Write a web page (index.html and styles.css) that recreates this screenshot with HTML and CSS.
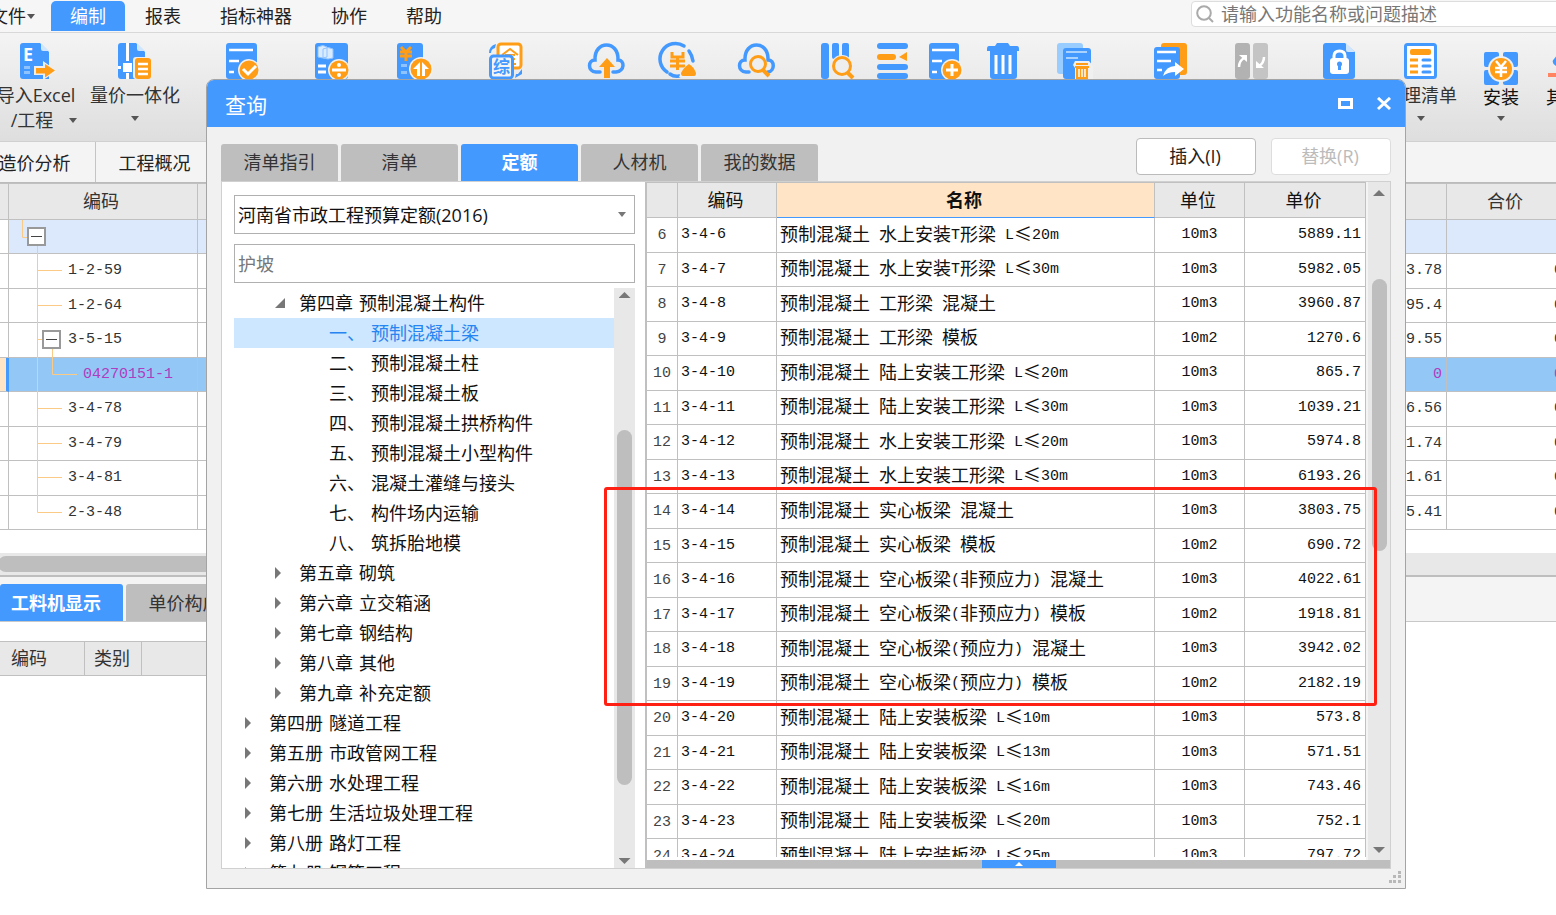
FILE: index.html
```html
<!DOCTYPE html>
<html lang="zh-CN">
<head>
<meta charset="utf-8">
<title>查询</title>
<link rel="stylesheet" href="styles.css">
</head>
<body>
<div class="app">
  <nav class="menubar">
    <button class="menu-item menu-file">文件<svg class="caret" viewBox="0 0 8 5"><path d="M0 0h8L4 5z"/></svg></button>
    <button class="menu-item active">编制</button>
    <button class="menu-item">报表</button>
    <button class="menu-item">指标神器</button>
    <button class="menu-item">协作</button>
    <button class="menu-item">帮助</button>
    <label class="search">
      <svg viewBox="0 0 18 18" aria-hidden="true"><circle cx="8" cy="8" r="6.8"/><path d="M13 13l4 4"/></svg>
      <input type="text" aria-label="搜索" placeholder="请输入功能名称或问题描述">
    </label>
  </nav>

  <div class="ribbon">
    <button class="tool tool-import">
      <svg class="icon" viewBox="0 0 36 36"><path class="b" d="M5 0h17l9 9v27H5q-3 0-3-3V3q0-3 3-3z"/><path class="lb" d="M23 0l8 8h-6q-2 0-2-2z"/><text class="w-text" x="5" y="18" font-size="18">E</text><path d="M6 23h6v3H6zM6 28h6v3H6z" fill="#8fc3ff"/><path d="M16 23h9v-5l14 10-14 9v-5h-9z" fill="#eee"/><path class="o" d="M18 25h9v-4l10 6.500-10 7v-4h-9z"/></svg>
      <span class="tool-label">导入Excel</span>
      <span class="tool-label tool-second">/工程<svg class="caret" viewBox="0 0 8 5"><path d="M0 0h8L4 5z"/></svg></span>
    </button>
    <button class="tool tool-unify">
      <svg class="icon" viewBox="0 0 36 36"><path class="b" d="M4 0h15l9 9v27H4q-3 0-3-3V3q0-3 3-3z"/><path class="lb" d="M20 0l8 8h-6q-2 0-2-2z"/><path d="M9 0h3v18H9zM9 30h3v6H9zM1 23h3v3H1zM6 20h9v9H6z" fill="#fff"/><rect x="16" y="14" width="18" height="22" rx="3" fill="#eee"/><rect class="o" x="18" y="15" width="16" height="21" rx="3"/><path class="ws" stroke-width="2.500" d="M21 21h10M21 26h10M21 31h10"/></svg>
      <span class="tool-label">量价一体化</span>
      <svg class="caret tool-caret" viewBox="0 0 8 5"><path d="M0 0h8L4 5z"/></svg>
    </button>
    <div class="icon-strip">
      <button aria-label="清单检查"><svg class="icon" viewBox="0 0 36 36"><rect class="b" x="1" width="31" height="36" rx="3"/><path class="ws" stroke-width="2.500" d="M4 7h24M4 18h10M4 29h5"/><circle cx="24" cy="27" r="11" fill="#f0f0f0"/><circle class="o" cx="24" cy="27" r="9.500"/><path class="ws" stroke-width="3" d="M18 26l5 5 8-8"/></svg></button>
      <button aria-label="费用分摊"><svg class="icon" viewBox="0 0 36 36"><rect class="b" x="1" width="33" height="36" rx="3"/><path d="M4 4q5-3 9 0v10q-4 2-9 0zM9 6q5-3 10 0v9q-5 2-10 0z" fill="#d9ebff" stroke="#8fc3ff"/><path class="ws" stroke-width="3" d="M4 23h8M4 29h8"/><circle cx="25" cy="27" r="11" fill="#f0f0f0"/><circle class="o" cx="25" cy="27" r="9.500"/><path class="ws" stroke-width="3" d="M18 27h14"/><circle cx="25" cy="22" r="2" fill="#fff"/><circle cx="25" cy="32" r="2" fill="#fff"/></svg></button>
      <button aria-label="调整造价"><svg class="icon" viewBox="0 0 36 36"><rect class="b" x="1" width="26" height="36" rx="3"/><path class="os" stroke-width="3" d="M5 4l5 5 5-5M10 9v9M4 9h12M4 13h12"/><path d="M5 21h6v3H5zM5 28h6v3H5z" fill="#8fc3ff"/><circle cx="25" cy="26" r="12" fill="#f0f0f0"/><circle class="o" cx="25" cy="26" r="10.500"/><path fill="#fff" d="M24 19v14h-3v-7h-4zM26 33V19l7 7h-4v7z"/></svg></button>
      <button aria-label="综合换算"><svg class="icon" viewBox="0 0 36 36"><rect x="10" y="1" width="23" height="24" rx="3" fill="#fff" stroke="#ff9d17" stroke-width="3"/><path class="os" stroke-width="2" d="M14 12l8-6 8 6M17 12h10M27 16h-3v5h4"/><rect x="1" y="12" width="25" height="24" rx="3" fill="#f4f4f4"/><rect x="2.500" y="13" width="22" height="22" rx="3" fill="#f4f4f4" stroke="#49f" stroke-width="3"/><text class="b" x="5" y="30" font-size="17" font-weight="700">综</text><path class="b" d="M1 10q0-7 7-9L7 5Q3 6 3 10zM34 26v5l-7 4 1-4h2z"/></svg></button>
      <button aria-label="云上传"><svg class="icon" viewBox="0 0 36 36"><path class="bs" stroke-width="3.500" d="M12 29H8C-1 28 0 17 7 17 6-3 31-3 30 17c7 0 7 11-2 12h-3"/><path class="o" d="M19 15l8 9h-5v11h-6V24h-5z"/></svg></button>
      <button aria-label="云计价"><svg class="icon" viewBox="0 0 36 36"><path class="bs" stroke-width="3.500" d="M7 29A15.500 15.500 0 0 1 24 3M29 8q3 4 4 10M10 31q4 3 9 2"/><path class="os" stroke-width="3" d="M12 9v5h11V9M17.500 14v13M10 18h15M10 23h15"/><path d="M29 18q-5 6-10 16h20z" fill="#eee"/><path class="o" d="M29 21q5 3 7 9 0 3-2 3H23q-2 0-2-3 3-6 8-9z"/></svg></button>
      <button aria-label="云查询"><svg class="icon" viewBox="0 0 36 36"><path class="bs" stroke-width="3.500" d="M11 29H8C-1 28 0 17 7 17 6-3 31-3 30 17c7 0 7 11 0 12"/><circle cx="20" cy="21" r="9" fill="#eee"/><circle class="os" cx="20" cy="21" r="7.500" stroke-width="3"/><path class="os" stroke-width="4" d="M25 27l6 6"/></svg></button>
      <button aria-label="查询"><svg class="icon" viewBox="0 0 36 36"><rect class="b" x="1" width="8" height="36" rx="3"/><rect class="b" x="12" width="7" height="16" rx="2"/><rect class="b" x="22" width="7" height="16" rx="2"/><circle cx="22" cy="23" r="11" fill="#eee"/><circle class="os" cx="22" cy="23" r="8.500" stroke-width="3"/><path class="os" stroke-width="4" d="M28 30l5 5"/></svg></button>
      <button aria-label="插入行"><svg class="icon" viewBox="0 0 36 36"><g class="b"><rect x="2" width="31" height="6" rx="3"/><rect x="2" y="21" width="31" height="6" rx="3"/><rect x="2" y="30" width="31" height="6" rx="3"/></g><rect class="o" x="2" y="11" width="19" height="6" rx="3"/><path class="o" d="M32 9v9l-8-4z"/></svg></button>
      <button aria-label="补充"><svg class="icon" viewBox="0 0 36 36"><rect class="b" x="1" width="30" height="36" rx="3"/><path class="ws" stroke-width="2.500" d="M4 7h23M4 18h10M4 29h5"/><circle cx="24" cy="27" r="11" fill="#f0f0f0"/><circle class="o" cx="24" cy="27" r="9.500"/><path class="ws" stroke-width="3" d="M18 27h12M24 21v12"/></svg></button>
      <button aria-label="删除"><svg class="icon" viewBox="0 0 36 36"><path class="b" d="M12 0h11l2 3h7q2 0 2 3v2H2V6q0-3 2-3h6zM5 8h27v25q0 3-3 3H8q-3 0-3-3z"/><path class="ws" stroke-width="3" d="M11 12v19M18 12v19M25 12v19"/></svg></button>
      <button aria-label="批量删除"><svg class="icon" viewBox="0 0 36 36"><rect x="0" width="26" height="31" rx="3" fill="#9cf"/><rect class="b" x="6" y="5" width="28" height="31" rx="3"/><path d="M9 9h21M9 15h12" stroke="#a9d2ff" stroke-width="2"/><path d="M18 18h14l4 5v13H18v-11l-2-3z" fill="#f0f0f0"/><path class="o" d="M19 20h12v2H19zM18 23h14v2H18zM19 25h12v11H19z"/><path class="ws" stroke-width="1.500" d="M22 26v8M25 26v8M28 26v8"/></svg></button>
      <button aria-label="复用组价"><svg class="icon" viewBox="0 0 36 36"><rect class="o" x="8" width="26" height="32" rx="3"/><rect class="b" x="1" y="4" width="26" height="32" rx="3"/><path class="ws" stroke-width="2.500" d="M4 9h19M4 18h14M4 27h5"/><path d="M10 33q3-10 12-10v-4l9 7-9 7v-4q-7 0-12 4z" fill="#fff"/></svg></button>
      <button aria-label="替换数据"><svg class="icon" viewBox="0 0 36 36"><rect x="1" width="15" height="36" rx="3" fill="#b2b2b2"/><rect x="19" width="15" height="36" rx="3" fill="#c4c4c4"/><path class="ws" stroke-width="2.500" d="M5 24q0-6 5-9M30 14q0 6-5 9"/><path d="M5 12h8v7zM22 18v7h8z" fill="#fff"/></svg></button>
      <button aria-label="锁定清单"><svg class="icon" viewBox="0 0 36 36"><path class="b" d="M5 0h19l10 9v24q0 3-3 3H5q-3 0-3-3V3q0-3 3-3z"/><path class="lb" d="M25 0l9 9h-7q-2 0-2-2z"/><rect x="9" y="15" width="19" height="16" rx="3" fill="#fff"/><path class="ws" stroke-width="3" d="M13 17v-4q0-5 5.500-5t5.500 5v4"/><circle class="b" cx="18.500" cy="21" r="2.500"/><path class="b" d="M17 21h3v6h-3z"/></svg></button>
    </div>
    <button class="tool tool-sort">
      <svg class="icon" viewBox="0 0 36 36"><rect x="2.500" y="1.500" width="30" height="33" rx="2" fill="#fff" stroke="#49f" stroke-width="3"/><rect class="o" x="7" y="6" width="21" height="6" rx="2"/><path class="os" stroke-width="3" d="M7 17h8M7 23h8M7 29h8"/><path class="bs" stroke-width="3" d="M20 17h7M20 23h7M20 29h7"/></svg>
      <span class="tool-label">整理清单</span>
      <svg class="caret tool-caret" viewBox="0 0 8 5"><path d="M0 0h8L4 5z"/></svg>
    </button>
    <button class="tool tool-install">
      <svg class="icon" viewBox="0 0 36 36"><g class="b"><rect x="1" y="1" width="15" height="15" rx="2"/><rect x="20" y="1" width="15" height="15" rx="2"/><rect x="1" y="19" width="15" height="15" rx="2"/><rect x="20" y="19" width="15" height="15" rx="2"/></g><circle cx="18" cy="18" r="13" fill="#f0f0f0"/><circle class="o" cx="18" cy="18" r="11"/><path class="ws" stroke-width="2.500" d="M13 10l5 6 5-6M18 16v10M12 17h12M12 21h12"/></svg>
      <span class="tool-label">安装</span>
      <svg class="caret tool-caret" viewBox="0 0 8 5"><path d="M0 0h8L4 5z"/></svg>
    </button>
    <button class="tool tool-other">
      <svg class="icon" viewBox="0 0 36 36"><path class="b" d="M12 11h8v13h-8q-8-4-4-8z"/><path d="M2 30h28v4H2z" fill="#ff8562"/></svg>
      <span class="tool-label">其他</span>
    </button>
  </div>

  <nav class="doc-tabs">
    <button>造价分析</button>
    <button>工程概况</button>
  </nav>

  <div class="bill-wrap">
    <table class="bill">
      <colgroup><col class="c-mark"><col class="c-code"><col><col class="c-price"><col class="c-total"></colgroup>
      <thead><tr><th></th><th>编码</th><th></th><th></th><th>合价</th></tr></thead>
      <tbody>
        <tr class="group"><td></td><td><div class="node"><svg class="guide g1" viewBox="0 0 18 34"><path d="M13.500 0v17.500H18M28.500 17v18"/></svg><button class="fold" aria-label="折叠"></button></div></td><td></td><td></td><td></td></tr>
        <tr><td></td><td><div class="node"><svg class="guide" viewBox="0 0 59 34"><path d="M28.500-1v36M28 16.500h25"/></svg>1-2-59</div></td><td></td><td>3.78</td><td>0</td></tr>
        <tr><td></td><td><div class="node"><svg class="guide" viewBox="0 0 59 34"><path d="M28.500-1v36M28 16.500h25"/></svg>1-2-64</div></td><td></td><td>95.4</td><td>0</td></tr>
        <tr><td></td><td><div class="node"><svg class="guide g2" viewBox="0 0 33 34"><path d="M28.500-1v36M28 16.500h5M43.500 17v18"/></svg><button class="fold" aria-label="折叠"></button><span class="after-fold">3-5-15</span></div></td><td></td><td>9.55</td><td>0</td></tr>
        <tr class="selected"><td></td><td><div class="node"><svg class="guide g3" viewBox="0 0 74 34"><path d="M28.500-1v36M43.500-1v17.500H68"/></svg>04270151-1</div></td><td></td><td>0</td><td>0</td></tr>
        <tr><td></td><td><div class="node"><svg class="guide" viewBox="0 0 59 34"><path d="M28.500-1v36M28 16.500h25"/></svg>3-4-78</div></td><td></td><td>6.56</td><td>0</td></tr>
        <tr><td></td><td><div class="node"><svg class="guide" viewBox="0 0 59 34"><path d="M28.500-1v36M28 16.500h25"/></svg>3-4-79</div></td><td></td><td>1.74</td><td>0</td></tr>
        <tr><td></td><td><div class="node"><svg class="guide" viewBox="0 0 59 34"><path d="M28.500-1v36M28 16.500h25"/></svg>3-4-81</div></td><td></td><td>1.61</td><td>0</td></tr>
        <tr><td></td><td><div class="node"><svg class="guide" viewBox="0 0 59 34"><path d="M28.500-1v17.500H53"/></svg>2-3-48</div></td><td></td><td>5.41</td><td>0</td></tr>
      </tbody>
    </table>
  </div>
  <div class="hscroll"><div class="hthumb"></div></div>
  <nav class="detail-tabs">
    <button class="active">工料机显示</button>
    <button>单价构成</button>
  </nav>
  <table class="detail">
    <colgroup><col class="d-code"><col class="d-kind"><col></colgroup>
    <thead><tr><th>编码</th><th>类别</th><th></th></tr></thead>
  </table>
</div>

<section class="dialog" role="dialog" aria-labelledby="dlg-title">
  <header class="titlebar">
    <h1 id="dlg-title">查询</h1>
    <button aria-label="最大化"><svg viewBox="0 0 16 14"><path d="M2.500 2.500h12v8h-12z"/></svg></button>
    <button aria-label="关闭"><svg viewBox="0 0 16 14"><path d="M2 1l12 11M14 1L2 12"/></svg></button>
  </header>
  <div class="toolbar">
    <nav class="tabs">
      <button>清单指引</button>
      <button>清单</button>
      <button class="active">定额</button>
      <button>人材机</button>
      <button>我的数据</button>
    </nav>
    <div class="actions">
      <button>插入(I)</button>
      <button disabled>替换(R)</button>
    </div>
  </div>
  <div class="panes">
    <aside class="left">
      <div class="select-wrap">
        <select aria-label="定额库"><option>河南省市政工程预算定额(2016)</option></select>
        <svg class="caret" viewBox="0 0 8 5"><path d="M0 0h8L4 5z"/></svg>
      </div>
      <input class="keyword" type="text" aria-label="关键字" placeholder="护坡">
      <div class="tree-area">
        <ul class="tree">
          <li class="l2 open"><span>第四章</span><span>预制混凝土构件</span></li>
          <li class="l3 current"><span>一、</span><span>预制混凝土梁</span></li>
          <li class="l3"><span>二、</span><span>预制混凝土柱</span></li>
          <li class="l3"><span>三、</span><span>预制混凝土板</span></li>
          <li class="l3"><span>四、</span><span>预制混凝土拱桥构件</span></li>
          <li class="l3"><span>五、</span><span>预制混凝土小型构件</span></li>
          <li class="l3"><span>六、</span><span>混凝土灌缝与接头</span></li>
          <li class="l3"><span>七、</span><span>构件场内运输</span></li>
          <li class="l3"><span>八、</span><span>筑拆胎地模</span></li>
          <li class="l2"><span>第五章</span><span>砌筑</span></li>
          <li class="l2"><span>第六章</span><span>立交箱涵</span></li>
          <li class="l2"><span>第七章</span><span>钢结构</span></li>
          <li class="l2"><span>第八章</span><span>其他</span></li>
          <li class="l2"><span>第九章</span><span>补充定额</span></li>
          <li class="l1"><span>第四册</span><span>隧道工程</span></li>
          <li class="l1"><span>第五册</span><span>市政管网工程</span></li>
          <li class="l1"><span>第六册</span><span>水处理工程</span></li>
          <li class="l1"><span>第七册</span><span>生活垃圾处理工程</span></li>
          <li class="l1"><span>第八册</span><span>路灯工程</span></li>
          <li class="l1"><span>第九册</span><span>钢筋工程</span></li>
        </ul>
        <div class="vscroll tree-scroll"><i class="up"></i><i class="thumb"></i><i class="down"></i></div>
      </div>
    </aside>
    <div class="right">
      <div class="quota-area">
        <div class="quota-clip">
          <table class="quota">
            <colgroup><col class="q-no"><col class="q-code"><col><col class="q-unit"><col class="q-price"></colgroup>
            <thead><tr><th></th><th>编码</th><th class="sorted">名称</th><th>单位</th><th>单价</th></tr></thead>
            <tbody>
              <tr><td>6</td><td>3-4-6</td><td>预制混凝土<i> </i>水上安装<i>T</i>形梁<i> L</i>≤<i>20m</i></td><td>10m3</td><td>5889.11</td></tr>
              <tr><td>7</td><td>3-4-7</td><td>预制混凝土<i> </i>水上安装<i>T</i>形梁<i> L</i>≤<i>30m</i></td><td>10m3</td><td>5982.05</td></tr>
              <tr><td>8</td><td>3-4-8</td><td>预制混凝土<i> </i>工形梁<i> </i>混凝土</td><td>10m3</td><td>3960.87</td></tr>
              <tr><td>9</td><td>3-4-9</td><td>预制混凝土<i> </i>工形梁<i> </i>模板</td><td>10m2</td><td>1270.6</td></tr>
              <tr><td>10</td><td>3-4-10</td><td>预制混凝土<i> </i>陆上安装工形梁<i> L</i>≤<i>20m</i></td><td>10m3</td><td>865.7</td></tr>
              <tr><td>11</td><td>3-4-11</td><td>预制混凝土<i> </i>陆上安装工形梁<i> L</i>≤<i>30m</i></td><td>10m3</td><td>1039.21</td></tr>
              <tr><td>12</td><td>3-4-12</td><td>预制混凝土<i> </i>水上安装工形梁<i> L</i>≤<i>20m</i></td><td>10m3</td><td>5974.8</td></tr>
              <tr><td>13</td><td>3-4-13</td><td>预制混凝土<i> </i>水上安装工形梁<i> L</i>≤<i>30m</i></td><td>10m3</td><td>6193.26</td></tr>
              <tr><td>14</td><td>3-4-14</td><td>预制混凝土<i> </i>实心板梁<i> </i>混凝土</td><td>10m3</td><td>3803.75</td></tr>
              <tr><td>15</td><td>3-4-15</td><td>预制混凝土<i> </i>实心板梁<i> </i>模板</td><td>10m2</td><td>690.72</td></tr>
              <tr><td>16</td><td>3-4-16</td><td>预制混凝土<i> </i>空心板梁<i>(</i>非预应力<i>) </i>混凝土</td><td>10m3</td><td>4022.61</td></tr>
              <tr><td>17</td><td>3-4-17</td><td>预制混凝土<i> </i>空心板梁<i>(</i>非预应力<i>) </i>模板</td><td>10m2</td><td>1918.81</td></tr>
              <tr><td>18</td><td>3-4-18</td><td>预制混凝土<i> </i>空心板梁<i>(</i>预应力<i>) </i>混凝土</td><td>10m3</td><td>3942.02</td></tr>
              <tr><td>19</td><td>3-4-19</td><td>预制混凝土<i> </i>空心板梁<i>(</i>预应力<i>) </i>模板</td><td>10m2</td><td>2182.19</td></tr>
              <tr><td>20</td><td>3-4-20</td><td>预制混凝土<i> </i>陆上安装板梁<i> L</i>≤<i>10m</i></td><td>10m3</td><td>573.8</td></tr>
              <tr><td>21</td><td>3-4-21</td><td>预制混凝土<i> </i>陆上安装板梁<i> L</i>≤<i>13m</i></td><td>10m3</td><td>571.51</td></tr>
              <tr><td>22</td><td>3-4-22</td><td>预制混凝土<i> </i>陆上安装板梁<i> L</i>≤<i>16m</i></td><td>10m3</td><td>743.46</td></tr>
              <tr><td>23</td><td>3-4-23</td><td>预制混凝土<i> </i>陆上安装板梁<i> L</i>≤<i>20m</i></td><td>10m3</td><td>752.1</td></tr>
              <tr><td>24</td><td>3-4-24</td><td>预制混凝土<i> </i>陆上安装板梁<i> L</i>≤<i>25m</i></td><td>10m3</td><td>797.72</td></tr>
            </tbody>
          </table>
        </div>
        <div class="vscroll quota-scroll"><i class="up"></i><i class="thumb"></i><i class="down"></i></div>
      </div>
      <div class="splitter"><button aria-label="展开"><svg viewBox="0 0 8 4"><path d="M0 4h8L4 0z"/></svg></button></div>
    </div>
  </div>
  <svg class="grip" viewBox="0 0 12 12"><path d="M9 0h3v3H9zM4 4h3v3H4zM9 4h3v3H9zM0 9h3v3H0zM4 9h3v3H4zM9 9h3v3H9z"/></svg>
  <div class="highlight"></div>
</section>
</body>
</html>
```
FILE: styles.css
```css
* { box-sizing: border-box; }
html, body { height: 100%; }
body {
  margin: 0;
  position: relative;
  overflow: hidden;
  background: #fff;
  color: #222;
  font: 18px/24px "Open Sans", "Noto Sans CJK SC", sans-serif;
}
button, input, select { font: inherit; color: inherit; margin: 0; padding: 0; border: 0; background: none; }
button { white-space: nowrap; }
svg { display: block; }
.caret { width: 8px; height: 5px; fill: #555; }

/* menu */
.menubar { display: flex; gap: 1px; height: 33px; padding-top: 1px; background: #f6f6f6; border-bottom: 1px solid #d8d8d8; }
.menu-item { height: 30px; padding: 0 19px; flex: none; }
.menu-item.active { background: #49f; color: #fff; border-radius: 5px 5px 0 0; }
.menu-file { display: flex; align-items: center; gap: 1px; width: 60px; margin-left: -10px; padding: 0; }
.search {
  display: flex; align-items: center; gap: 7px;
  width: 375px; height: 26px; margin: 0 -10px 0 auto; padding-left: 4px;
  background: #fff; border: 1px solid #ddd; border-radius: 4px;
}
.search svg { width: 18px; height: 18px; fill: none; stroke: #aaa; stroke-width: 2; flex: none; }
.search input { flex: 1; min-width: 0; height: 24px; outline: 0; }
.search input::placeholder { color: #777; opacity: 1; }

/* ribbon */
.ribbon {
  display: flex; height: 109px; padding-top: 10px; overflow: hidden;
  background: linear-gradient(#f4f4f4, #dedede); border-bottom: 1px solid #d0d0d0;
}
.icon { width: 36px; height: 36px; overflow: visible; flex: none; }
.b { fill: #49f; }
.o { fill: #ff9d17; }
.lb { fill: #cfe6ff; }
.w-text { fill: #fff; font-weight: 700; }
.bs, .os, .ws { fill: none; }
.bs { stroke: #49f; stroke-linecap: round; }
.os { stroke: #ff9d17; }
.ws { stroke: #fff; }
.tool { display: flex; flex-direction: column; align-items: center; flex: none; height: 98px; color: #333; }
.tool-label { margin-top: 4px; }
.tool-import { width: 96px; margin-left: -12px; }
.tool-second { display: flex; align-items: center; gap: 16px; margin-top: 1px; padding-left: 16px; }
.tool-unify { width: 102px; }
.tool-caret { margin-top: 9px; }
.tool-sort { width: 72px; margin-left: 28px; }
.tool-install { width: 80px; margin-left: 4px; padding-top: 8px; color: #111; }
.tool-install .tool-label { margin-top: -2px; }
.tool-install .tool-caret { margin-top: 7px; }
.tool-other { width: 46px; color: #111; }
.tool-other .tool-label { margin-top: 6px; }
.icon-strip {
  display: grid; flex: none; height: 36px; padding-left: 39px;
  grid-template-columns: 89px 82px 92px 100px 72px 78px 82px 55px 53px 57px 72px 96px 81px 87px 36px;
}
.icon-strip button { width: 36px; }

/* document tabs */
.doc-tabs { display: flex; height: 41px; background: #f4f4f4; border-bottom: 1px solid #bbb; }
.doc-tabs button { width: 118px; border-right: 1px solid #c4c4c4; padding-top: 2px; }
.doc-tabs button:first-child { width: 120px; margin-left: -24px; padding-right: 2px; }

/* bill table */
.bill-wrap { overflow: hidden; height: 370px; }
.bill { width: calc(100% + 12px); table-layout: fixed; border-spacing: 0; font: 15px/20px "Liberation Mono", monospace; color: #333; }
.c-mark { width: 9px; }
.c-code { width: 189px; }
.c-price { width: 160px; }
.c-total { width: 121px; }
.bill th { height: 37px; padding: 0 4px 4px 0; background: #e8e8e8; border: solid #c0c0c0; border-width: 1px 1px 1px 0; font: 18px/24px "Noto Sans CJK SC", sans-serif; color: #333; }
.bill td { padding: 0; border: solid #c0c0c0; border-width: 0 1px 1px 0; }
.bill tbody tr { height: 35px; }
.bill tbody tr:nth-child(odd) { height: 34px; }
.bill td:nth-child(n+4) { padding-right: 4px; text-align: right; }
.group td { background: #dce9fd; }
.group td:first-child { background: #fff; }
.selected td { background: #93c8f6; color: #b03cc0; }
.selected td:first-child { background: #fde5c6; border-right: 3px solid #49f; }
.bill td:nth-child(2) { vertical-align: top; }
.node { display: flex; align-items: center; height: 33px; }
.guide { align-self: flex-start; width: 59px; height: 34px; flex: none; overflow: visible; fill: none; stroke: #fbcb85; }
.guide.g1 { width: 18px; }
.guide.g2 { width: 33px; }
.guide.g3 { width: 74px; }
.fold { width: 19px; height: 19px; border: 2px solid #999; background: linear-gradient(#444, #444) center / 11px 1px no-repeat #fff; }
.after-fold { padding-left: 7px; }

.hscroll { height: 24px; padding: 3px 0; background: #e8e8e8; border-bottom: 2px solid #bebebe; }
.hthumb { width: 64%; height: 16px; margin-left: -2px; border-radius: 8px; background: #bebebe; }
.detail-tabs { display: flex; align-items: flex-end; gap: 3px; height: 45px; background: #f4f4f4; border-bottom: 1px solid #c8c8c8; }
.detail-tabs button { width: 117px; height: 37px; background: #bebebe; border-radius: 3px 3px 0 0; color: #333; }
.detail-tabs .active { width: 123px; padding-right: 11px; background: #49f; color: #fff; font-weight: 700; }
.detail { width: 80%; margin-top: 19px; table-layout: fixed; border-spacing: 0; }
.d-code { width: 85px; }
.d-kind { width: 57px; }
.detail th { height: 35px; padding: 0 2px 2px 0; background: #e8e8e8; border: solid #c0c0c0; border-width: 1px 1px 1px 0; font-weight: 400; color: #333; }
.detail th:first-child { padding-right: 26px; }

/* dialog */
.dialog {
  position: absolute; left: 206px; right: 150px; top: 79px; bottom: 26px;
  display: flex; flex-direction: column;
  padding-bottom: 19px;
  background: #f1f1f1; border: 1px solid #a4a4a4; border-radius: 8px 8px 0 0;
}
.titlebar { display: flex; align-items: center; gap: 19px; height: 47px; flex: none; padding: 0 11px 0 18px; background: #49f; color: #fff; border-radius: 7px 7px 0 0; }
.titlebar h1 { flex: 1; margin: 0; padding-top: 2px; font-size: 21px; line-height: 28px; font-weight: 400; }
.titlebar button { width: 20px; height: 14px; }
.titlebar svg { width: 16px; height: 14px; margin: 0 auto; fill: none; stroke: #fff; stroke-width: 3; }
.toolbar { display: flex; justify-content: space-between; align-items: flex-end; height: 54px; flex: none; padding: 0 14px; }
.tabs { display: flex; gap: 3px; }
.tabs button { width: 117px; height: 37px; padding-bottom: 2px; background: #bebebe; color: #333; border-radius: 3px 3px 0 0; }
.tabs .active { background: #49f; color: #fff; font-weight: 700; }
.actions { display: flex; gap: 15px; padding-bottom: 6px; }
.actions button { width: 120px; height: 37px; padding: 0 2px 2px 0; background: #fff; border: 1px solid #bbb; border-radius: 4px; }
.actions button:disabled { border-color: #ddd; color: #bbb; }

.panes { display: flex; flex: 1; min-height: 0; margin: 0 14px; border: 1px solid #d0d0d0; background: #fff; }
.left { display: flex; flex-direction: column; width: 423px; flex: none; padding: 13px 10px 0 12px; }
.select-wrap { display: grid; align-items: center; height: 39px; border: 1px solid #b0b0b0; }
.select-wrap > * { grid-area: 1 / 1; }
.select-wrap select { appearance: none; width: 100%; height: 36px; padding: 0 3px; outline: 0; color: #111; }
.select-wrap .caret { justify-self: end; margin-right: 8px; fill: #777; pointer-events: none; }
.keyword { height: 39px; margin-top: 10px; padding: 0 3px; border: 1px solid #b0b0b0; outline: 0; }
.keyword::placeholder { color: #777; opacity: 1; }
.tree-area { display: flex; flex: 1; min-height: 0; margin-top: 5px; }
.tree { flex: 1; margin: 0; padding: 0; overflow: hidden; list-style: none; color: #111; }
.tree li { display: flex; align-items: center; gap: 6px; height: 30px; }
.tree li::before { content: ""; width: 6px; height: 12px; margin-right: 12px; background: #777; clip-path: polygon(0 0, 100% 50%, 0 100%); }
.tree .l1 { padding-left: 11px; }
.tree .l2 { padding-left: 41px; }
.tree .l3 { padding-left: 95px; }
.tree .l3::before { display: none; }
.tree .open::before { width: 10px; height: 10px; margin-right: 8px; clip-path: polygon(100% 0, 100% 100%, 0 100%); }
.tree .current { background: #cce7ff; color: #2784f0; }

.vscroll { display: flex; flex-direction: column; align-items: center; width: 21px; flex: none; background: #e8e8e8; }
.vscroll .up, .vscroll .down { width: 12px; height: 6px; background: #777; clip-path: polygon(50% 0, 100% 100%, 0 100%); }
.vscroll .down { margin-top: auto; clip-path: polygon(0 0, 100% 0, 50% 100%); }
.vscroll .thumb { width: 15px; border-radius: 8px; background: #bebebe; }
.tree-scroll { padding: 4px 0; }
.tree-scroll .thumb { height: 62%; margin-top: 132px; }
.quota-scroll { width: 24px; padding: 8px 0 7px; border-left: 2px solid #f4f4f4; }
.quota-scroll .thumb { height: 41%; margin-top: 83px; }

.right { display: flex; flex-direction: column; flex: 1; min-width: 0; border-left: 2px solid #c0c0c0; }
.quota-area { display: flex; flex: 1; min-height: 0; }
.quota-clip { flex: 1; min-width: 0; overflow: hidden; border-bottom: 3px solid #fff; }
.quota { width: 100%; table-layout: fixed; border-spacing: 0; font: 15px/20px "Liberation Mono", monospace; color: #111; }
.q-no { width: 31px; }
.q-code { width: 99px; }
.q-unit { width: 90px; }
.q-price { width: 121px; }
.quota th { height: 36px; padding: 0 3px 2px 0; background: #e8e8e8; border: solid #c0c0c0; border-width: 1px 1px 1px 0; font: 18px/24px "Noto Sans CJK SC", sans-serif; }
.quota .sorted { background: #ffe5c6; border-bottom-color: #49f; font-weight: 700; }
.quota tbody tr { height: 34px; }
.quota tbody tr:nth-child(odd) { height: 35px; }
.quota td { padding: 0 3px; border: solid #c0c0c0; border-width: 0 1px 1px 0; white-space: pre; }
.quota td:nth-child(1) { padding: 2px 0 0; text-align: center; color: #444; }
.quota td:nth-child(3) { padding-bottom: 4px; font: 18px/20px "Noto Sans CJK SC", sans-serif; }
.quota td:nth-child(4) { text-align: center; }
.quota td:nth-child(5) { padding-right: 4px; text-align: right; }
.quota i { font: 15px/16px "Liberation Mono", monospace; vertical-align: 2px; }
.splitter { display: flex; justify-content: center; height: 8px; flex: none; background: #bebebe; }
.splitter button { width: 74px; height: 8px; background: #49f; }
.splitter svg { width: 8px; height: 4px; margin: 0 auto; fill: #fff; }

.grip { position: absolute; right: 4px; bottom: 5px; width: 12px; height: 12px; fill: #b8b8b8; }
.highlight { position: absolute; left: 397px; right: 28px; top: 407px; height: 219px; border: 3px solid #ff2014; border-radius: 3px; pointer-events: none; }
```
